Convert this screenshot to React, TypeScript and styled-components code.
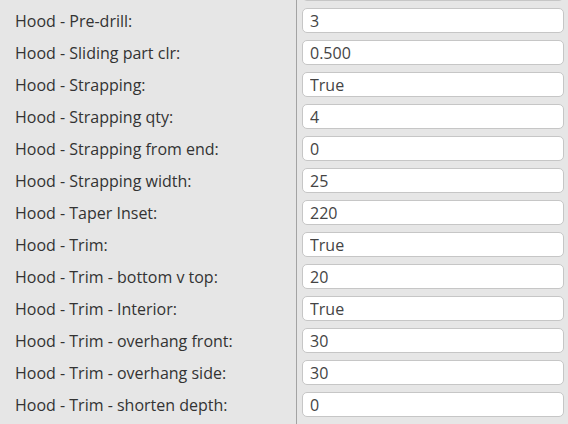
import React from "react";
import styled, { createGlobalStyle } from "styled-components";

const GlobalStyle = createGlobalStyle`
  html, body {
    margin: 0;
    padding: 0;
    background: #e6e6e6;
    overflow: hidden;
  }
  body {
    font-family: "Open Sans", "Liberation Sans", sans-serif;
  }
`;

const Root = styled.div`
  height: 424px;
  overflow: hidden;
  background: #e6e6e6;
`;

// the list is scrolled: the row above "Pre-drill" only shows its field's lower edge
const List = styled.div`
  margin-top: -27px;
`;

const Row = styled.div`
  display: grid;
  grid-template-columns: 297px 1fr;
  height: 32px;
`;

const Label = styled.div`
  display: flex;
  align-items: center;
  padding-left: 15px;
  font-size: 16px;
  color: #333;
  border-right: 1px solid #a3a3a3;
  white-space: nowrap;
`;

const Cell = styled.div`
  display: flex;
  align-items: flex-start;
  padding: 3px 4px 0 5px;
`;

const Field = styled.input`
  box-sizing: border-box;
  width: 100%;
  height: 25px;
  margin: 0;
  padding: 0 7px;
  border: 1px solid #c6c6c6;
  border-radius: 5px;
  background: #fff;
  font-family: "Open Sans", "Liberation Sans", sans-serif;
  font-size: 16px;
  color: #444;
  outline: none;
`;

const rows: [string, string][] = [
  ["", ""],
  ["Hood - Pre-drill:", "3"],
  ["Hood - Sliding part clr:", "0.500"],
  ["Hood - Strapping:", "True"],
  ["Hood - Strapping qty:", "4"],
  ["Hood - Strapping from end:", "0"],
  ["Hood - Strapping width:", "25"],
  ["Hood - Taper Inset:", "220"],
  ["Hood - Trim:", "True"],
  ["Hood - Trim - bottom v top:", "20"],
  ["Hood - Trim - Interior:", "True"],
  ["Hood - Trim - overhang front:", "30"],
  ["Hood - Trim - overhang side:", "30"],
  ["Hood - Trim - shorten depth:", "0"],
  ["", ""],
];

const App = () => (
  <Root>
    <GlobalStyle />
    <List>
      {rows.map(([label, value], i) => (
        <Row key={i}>
          <Label>{label}</Label>
          <Cell>
            <Field defaultValue={value} />
          </Cell>
        </Row>
      ))}
    </List>
  </Root>
);

export default App;
